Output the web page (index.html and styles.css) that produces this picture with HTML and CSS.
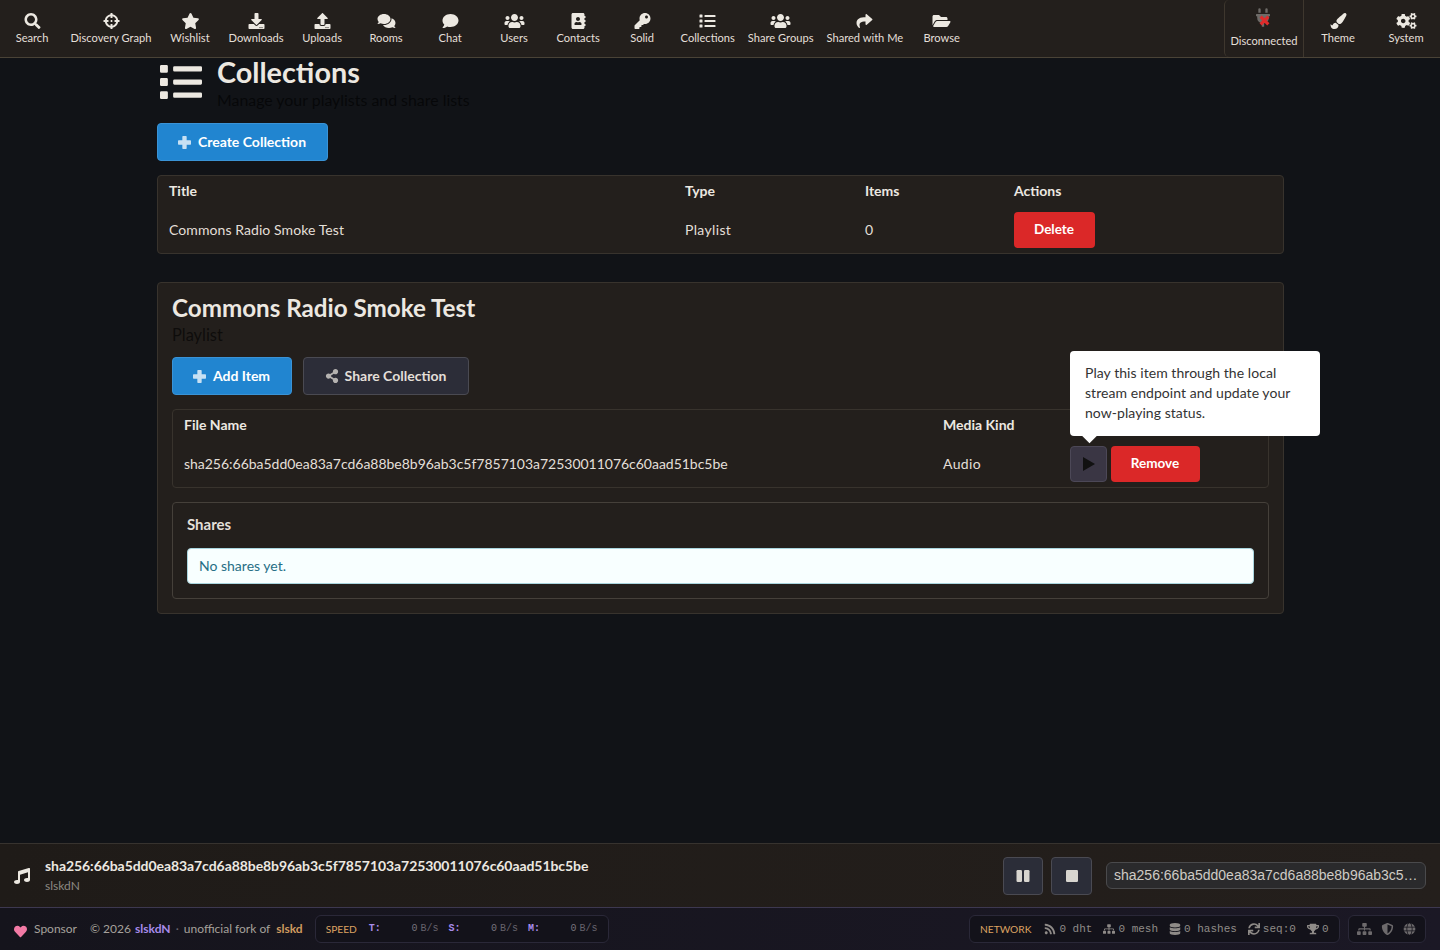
FILE: index.html
```html
<!DOCTYPE html>
<html lang="en">
<head>
  <meta charset="UTF-8">
  <meta name="viewport" content="width=device-width, initial-scale=1.0">
  <title>Collections - slskdN</title>
  <link rel="stylesheet" href="styles.css">
</head>
<body>
  <!-- icon sprite -->
  <svg class="sprite" xmlns="http://www.w3.org/2000/svg">
    <symbol id="i-search" viewBox="0 0 512 512"><path d="M505 442.7L405.3 343c-4.5-4.5-10.6-7-17-7H372c27.6-35.3 44-79.7 44-128C416 93.1 322.9 0 208 0S0 93.1 0 208s93.1 208 208 208c48.3 0 92.7-16.4 128-44v16.3c0 6.4 2.5 12.5 7 17l99.7 99.7c9.4 9.4 24.6 9.4 33.9 0l28.3-28.3c9.4-9.4 9.4-24.6.1-34zM208 336c-70.7 0-128-57.2-128-128 0-70.7 57.2-128 128-128 70.7 0 128 57.2 128 128 0 70.7-57.2 128-128 128z"/></symbol>
    <symbol id="i-crosshairs" viewBox="0 0 512 512"><path d="M500 224h-30.364C455.724 130.325 381.675 56.276 288 42.364V12c0-6.627-5.373-12-12-12h-40c-6.627 0-12 5.373-12 12v30.364C130.325 56.276 56.276 130.325 42.364 224H12c-6.627 0-12 5.373-12 12v40c0 6.627 5.373 12 12 12h30.364C56.276 381.675 130.325 455.724 224 469.636V500c0 6.627 5.373 12 12 12h40c6.627 0 12-5.373 12-12v-30.364C381.675 455.724 455.724 381.675 469.636 288H500c6.627 0 12-5.373 12-12v-40c0-6.627-5.373-12-12-12zM288 404.634V364c0-6.627-5.373-12-12-12h-40c-6.627 0-12 5.373-12 12v40.634C165.826 392.232 119.783 346.243 107.366 288H148c6.627 0 12-5.373 12-12v-40c0-6.627-5.373-12-12-12h-40.634C119.768 165.826 165.757 119.783 224 107.366V148c0 6.627 5.373 12 12 12h40c6.627 0 12-5.373 12-12v-40.634C346.174 119.768 392.217 165.757 404.634 224H364c-6.627 0-12 5.373-12 12v40c0 6.627 5.373 12 12 12h40.634C392.232 346.174 346.243 392.217 288 404.634zM288 256c0 17.673-14.327 32-32 32s-32-14.327-32-32c0-17.673 14.327-32 32-32s32 14.327 32 32z"/></symbol>
    <symbol id="i-star" viewBox="0 0 576 512"><path d="M259.3 17.8L194 150.2 47.9 171.5c-26.2 3.8-36.7 36.1-17.7 54.6l105.7 103-25 145.5c-4.5 26.3 23.2 46 46.4 33.7L288 439.6l130.7 68.7c23.2 12.2 50.9-7.4 46.4-33.7l-25-145.5 105.7-103c19-18.5 8.5-50.8-17.7-54.6L382 150.2 316.7 17.8c-11.7-23.6-45.6-23.9-57.4 0z"/></symbol>
    <symbol id="i-download" viewBox="0 0 512 512"><path d="M216 0h80c13.3 0 24 10.7 24 24v168h87.7c17.8 0 26.7 21.5 14.1 34.1L269.7 378.3c-7.5 7.5-19.8 7.5-27.3 0L90.1 226.1c-12.6-12.6-3.7-34.1 14.1-34.1H192V24c0-13.3 10.7-24 24-24zm296 376v112c0 13.3-10.7 24-24 24H24c-13.3 0-24-10.7-24-24V376c0-13.3 10.7-24 24-24h146.7l49 49c20.1 20.1 52.5 20.1 72.6 0l49-49H488c13.3 0 24 10.7 24 24zm-124 88c0-11-9-20-20-20s-20 9-20 20 9 20 20 20 20-9 20-20zm64 0c0-11-9-20-20-20s-20 9-20 20 9 20 20 20 20-9 20-20z"/></symbol>
    <symbol id="i-upload" viewBox="0 0 512 512"><path d="M296 384h-80c-13.3 0-24-10.7-24-24V192h-87.7c-17.8 0-26.7-21.5-14.1-34.1L242.3 5.7c7.5-7.5 19.8-7.5 27.3 0l152.2 152.2c12.6 12.6 3.7 34.1-14.1 34.1H320v168c0 13.3-10.7 24-24 24zm216-8v112c0 13.3-10.7 24-24 24H24c-13.3 0-24-10.7-24-24V376c0-13.3 10.7-24 24-24h136v8c0 30.9 25.1 56 56 56h80c30.9 0 56-25.1 56-56v-8h136c13.3 0 24 10.7 24 24zm-124 88c0-11-9-20-20-20s-20 9-20 20 9 20 20 20 20-9 20-20zm64 0c0-11-9-20-20-20s-20 9-20 20 9 20 20 20 20-9 20-20z"/></symbol>
    <symbol id="i-comments" viewBox="0 0 576 512"><path d="M416 192c0-88.4-93.1-160-208-160S0 103.6 0 192c0 34.3 14.1 65.9 38 92-13.4 30.2-35.5 54.2-35.8 54.5-2.2 2.3-2.8 5.7-1.5 8.7S4.8 352 8 352c36.6 0 66.9-12.3 88.7-25 32.2 15.7 70.3 25 111.3 25 114.9 0 208-71.6 208-160zm122 220c23.9-26 38-57.7 38-92 0-66.9-53.5-124.2-129.3-148.1.9 6.6 1.3 13.3 1.3 20.1 0 105.9-107.7 192-240 192-10.8 0-21.3-.8-31.7-1.9C207.8 439.6 281.8 480 368 480c41 0 79.1-9.2 111.3-25 21.8 12.7 52.1 25 88.7 25 3.2 0 6.1-1.9 7.3-4.8 1.3-2.9.7-6.3-1.5-8.7-.3-.3-22.4-24.2-35.8-54.5z"/></symbol>
    <symbol id="i-comment" viewBox="0 0 512 512"><path d="M256 32C114.6 32 0 125.1 0 240c0 49.6 21.4 95 57 130.7C44.5 421.1 2.7 466 2.2 466.5c-2.2 2.3-2.8 5.7-1.5 8.7S4.8 480 8 480c66.3 0 116-31.8 140.6-51.4 32.7 12.3 69 19.4 107.4 19.4 141.4 0 256-93.1 256-208S397.4 32 256 32z"/></symbol>
    <symbol id="i-users" viewBox="0 0 640 512"><path d="M96 224c35.3 0 64-28.7 64-64s-28.7-64-64-64-64 28.7-64 64 28.7 64 64 64zm448 0c35.3 0 64-28.7 64-64s-28.7-64-64-64-64 28.7-64 64 28.7 64 64 64zm32 32h-64c-17.6 0-33.5 7.1-45.1 18.6 40.3 22.1 68.9 62 75.1 109.4h66c17.7 0 32-14.3 32-32v-32c0-35.3-28.7-64-64-64zm-256 0c61.9 0 112-50.1 112-112S381.9 32 320 32 208 82.1 208 144s50.1 112 112 112zm76.8 32h-8.3c-20.8 10-43.9 16-68.5 16s-47.6-6-68.5-16h-8.3C179.6 288 128 339.6 128 403.2V432c0 26.5 21.5 48 48 48h288c26.5 0 48-21.5 48-48v-28.8c0-63.6-51.6-115.2-115.2-115.2zm-223.7-13.4C161.5 263.1 145.6 256 128 256H64c-35.3 0-64 28.7-64 64v32c0 17.7 14.3 32 32 32h65.9c6.3-47.4 34.9-87.3 75.2-109.4z"/></symbol>
    <symbol id="i-book" viewBox="0 0 448 512"><path d="M436 160c6.6 0 12-5.4 12-12v-40c0-6.6-5.4-12-12-12h-20V48c0-26.5-21.5-48-48-48H48C21.5 0 0 21.5 0 48v416c0 26.5 21.5 48 48 48h320c26.5 0 48-21.5 48-48v-48h20c6.6 0 12-5.4 12-12v-40c0-6.6-5.4-12-12-12h-20v-64h20c6.6 0 12-5.4 12-12v-40c0-6.6-5.4-12-12-12h-20v-64h20zm-228-32c35.3 0 64 28.7 64 64s-28.7 64-64 64-64-28.7-64-64 28.7-64 64-64zm112 236.8c0 10.6-10 19.2-22.4 19.2H118.4C106 384 96 375.4 96 364.8v-19.2c0-31.8 30.1-57.6 67.2-57.6h5c12.3 5.1 25.7 8 39.8 8s27.6-2.9 39.8-8h5c37.1 0 67.2 25.8 67.2 57.6v19.2z"/></symbol>
    <symbol id="i-key" viewBox="0 0 512 512"><path d="M512 176.001C512 273.203 433.202 352 336 352c-11.22 0-22.19-1.062-32.827-3.069l-24.012 27.014A23.999 23.999 0 0 1 261.223 384H224v40c0 13.255-10.745 24-24 24h-40v40c0 13.255-10.745 24-24 24H24c-13.255 0-24-10.745-24-24v-78.059c0-6.365 2.529-12.47 7.029-16.971l161.802-161.802C163.108 213.814 160 195.271 160 176 160 78.798 238.797.001 335.999 0 433.488-.001 512 78.511 512 176.001zM336 128c0 26.51 21.49 48 48 48s48-21.49 48-48-21.49-48-48-48-48 21.49-48 48z"/></symbol>
    <symbol id="i-list" viewBox="0 0 512 512"><path d="M80 368H16a16 16 0 0 0-16 16v64a16 16 0 0 0 16 16h64a16 16 0 0 0 16-16v-64a16 16 0 0 0-16-16zm0-320H16A16 16 0 0 0 0 64v64a16 16 0 0 0 16 16h64a16 16 0 0 0 16-16V64a16 16 0 0 0-16-16zm0 160H16a16 16 0 0 0-16 16v64a16 16 0 0 0 16 16h64a16 16 0 0 0 16-16v-64a16 16 0 0 0-16-16zm416 176H176a16 16 0 0 0-16 16v32a16 16 0 0 0 16 16h320a16 16 0 0 0 16-16v-32a16 16 0 0 0-16-16zm0-320H176a16 16 0 0 0-16 16v32a16 16 0 0 0 16 16h320a16 16 0 0 0 16-16V80a16 16 0 0 0-16-16zm0 160H176a16 16 0 0 0-16 16v32a16 16 0 0 0 16 16h320a16 16 0 0 0 16-16v-32a16 16 0 0 0-16-16z"/></symbol>
    <symbol id="i-share" viewBox="0 0 512 512"><path d="M503.691 189.836L327.687 37.851C312.281 24.546 288 35.347 288 56.015v80.053C127.371 137.907 0 170.1 0 322.326c0 61.441 39.581 122.309 83.333 154.132 13.653 9.931 33.111-2.533 28.077-18.631C66.066 312.814 132.917 274.316 288 272.085V360c0 20.7 24.3 31.453 39.687 18.164l176.004-152c11.071-9.562 11.086-26.753 0-36.328z"/></symbol>
    <symbol id="i-folder" viewBox="0 0 576 512"><path d="M572.694 292.093L500.27 416.248A63.997 63.997 0 0 1 444.989 448H45.025c-18.523 0-30.064-20.093-20.731-36.093l72.424-124.155A64 64 0 0 1 152 256h399.964c18.523 0 30.064 20.093 20.73 36.093zM152 224h328v-48c0-26.51-21.49-48-48-48H272l-64-64H48C21.49 64 0 85.49 0 112v278.046l69.077-118.418C86.214 242.25 117.989 224 152 224z"/></symbol>
    <symbol id="i-plug" viewBox="0 0 384 512"><path d="M320 32a32 32 0 0 0-64 0v96h64zm48 128H16a16 16 0 0 0-16 16v32a16 16 0 0 0 16 16h16v32a160.07 160.07 0 0 0 128 156.8V512h64v-99.2A160.07 160.07 0 0 0 352 256v-32h16a16 16 0 0 0 16-16v-32a16 16 0 0 0-16-16zM128 32a32 32 0 0 0-64 0v96h64z"/></symbol>
    <symbol id="i-brush" viewBox="0 0 512 512"><path d="M167.02 309.34c-40.12 2.58-76.53 17.86-97.19 72.3-2.35 6.21-8 9.98-14.59 9.98-11.11 0-45.46-27.67-55.25-34.35C0 439.62 37.93 512 128 512c75.86 0 128-43.77 128-120.19 0-3.11-.65-6.08-.97-9.13l-88.01-73.34zM457.89 0c-15.16 0-29.37 6.71-40.21 16.45C213.27 199.05 192 203.34 192 257.09c0 13.7 3.25 26.76 8.73 38.7l63.82 53.18c7.21 1.8 14.64 3.03 22.39 3.03 62.11 0 98.11-45.47 211.16-256.46 7.38-14.35 13.9-29.85 13.9-45.99C512 20.64 486 0 457.89 0z"/></symbol>
    <symbol id="i-cogs" viewBox="0 0 640 512"><path d="M512.1 191l-8.2 14.3c-3 5.3-9.4 7.5-15.1 5.4-11.8-4.4-22.6-10.7-32.1-18.6-4.6-3.8-5.8-10.5-2.8-15.7l8.2-14.3c-6.9-8-12.3-17.3-15.9-27.4h-16.5c-6 0-11.2-4.3-12.2-10.3-2-12-2.1-24.6 0-37.1 1-6 6.2-10.4 12.2-10.4h16.5c3.6-10.1 9-19.4 15.9-27.4l-8.2-14.3c-3-5.2-1.9-11.9 2.8-15.7 9.5-7.9 20.4-14.2 32.1-18.6 5.7-2.1 12.1.1 15.1 5.4l8.2 14.3c10.5-1.9 21.2-1.9 31.7 0L552 6.3c3-5.3 9.4-7.5 15.1-5.4 11.8 4.4 22.6 10.7 32.1 18.6 4.6 3.8 5.8 10.5 2.8 15.7l-8.2 14.3c6.9 8 12.3 17.3 15.9 27.4h16.5c6 0 11.2 4.3 12.2 10.3 2 12 2.1 24.6 0 37.1-1 6-6.2 10.4-12.2 10.4h-16.5c-3.6 10.1-9 19.4-15.9 27.4l8.2 14.3c3 5.2 1.9 11.9-2.8 15.7-9.5 7.9-20.4 14.2-32.1 18.6-5.7 2.1-12.1-.1-15.1-5.4l-8.2-14.3c-10.4 1.9-21.2 1.9-31.7 0zm-10.5-58.8c38.5 29.6 82.4-14.3 52.8-52.8-38.5-29.7-82.4 14.3-52.8 52.8zM386.3 286.1l33.7 16.8c10.1 5.8 14.5 18.1 10.5 29.1-8.9 24.2-26.4 46.4-42.6 65.8-7.4 8.9-20.2 11.1-30.3 5.3l-29.1-16.8c-16 13.7-34.6 24.6-54.9 31.7v33.6c0 11.6-8.3 21.6-19.7 23.6-24.6 4.2-50.4 4.4-75.9 0-11.5-2-20-11.9-20-23.6V418c-20.3-7.2-38.9-18-54.9-31.7L74 403c-10 5.8-22.9 3.6-30.3-5.3-16.2-19.4-33.3-41.6-42.2-65.7-4-10.9.4-23.2 10.5-29.1l33.3-16.8c-3.9-20.9-3.9-42.4 0-63.4L12 205.8c-10.1-5.8-14.6-18.1-10.5-29 8.9-24.2 26-46.4 42.2-65.8 7.4-8.9 20.2-11.1 30.3-5.3l29.1 16.8c16-13.7 34.6-24.6 54.9-31.7V57.1c0-11.5 8.2-21.5 19.6-23.5 24.6-4.2 50.5-4.4 76-.1 11.5 2 20 11.9 20 23.6v33.6c20.3 7.2 38.9 18 54.9 31.7l29.1-16.8c10-5.8 22.9-3.6 30.3 5.3 16.2 19.4 33.2 41.6 42.1 65.8 4 10.9.1 23.2-10 29.1l-33.7 16.8c3.9 21 3.9 42.5 0 63.5zm-117.6 21.1c59.2-77-28.7-164.9-105.7-105.7-59.2 77 28.7 164.9 105.7 105.7zm243.4 182.7l-8.2 14.3c-3 5.3-9.4 7.5-15.1 5.4-11.8-4.4-22.6-10.7-32.1-18.6-4.6-3.8-5.8-10.5-2.8-15.7l8.2-14.3c-6.9-8-12.3-17.3-15.9-27.4h-16.5c-6 0-11.2-4.3-12.2-10.3-2-12-2.1-24.6 0-37.1 1-6 6.2-10.4 12.2-10.4h16.5c3.6-10.1 9-19.4 15.9-27.4l-8.2-14.3c-3-5.2-1.9-11.9 2.8-15.7 9.5-7.9 20.4-14.2 32.1-18.6 5.7-2.1 12.1.1 15.1 5.4l8.2 14.3c10.5-1.9 21.2-1.9 31.7 0l8.2-14.3c3-5.3 9.4-7.5 15.1-5.4 11.8 4.4 22.6 10.7 32.1 18.6 4.6 3.8 5.8 10.5 2.8 15.7l-8.2 14.3c6.9 8 12.3 17.3 15.9 27.4h16.5c6 0 11.2 4.3 12.2 10.3 2 12 2.1 24.6 0 37.1-1 6-6.2 10.4-12.2 10.4h-16.5c-3.6 10.1-9 19.4-15.9 27.4l8.2 14.3c3 5.2 1.9 11.9-2.8 15.7-9.5 7.9-20.4 14.2-32.1 18.6-5.7 2.1-12.1-.1-15.1-5.4l-8.2-14.3c-10.4 1.9-21.2 1.9-31.7 0zM501.6 431c38.5 29.6 82.4-14.3 52.8-52.8-38.5-29.6-82.4 14.3-52.8 52.8z"/></symbol>
    <symbol id="i-plus" viewBox="0 0 12 12"><path d="M4.6 0h2.8c.4 0 .6.2.6.6V4h3.4c.4 0 .6.2.6.6v2.8c0 .4-.2.6-.6.6H8v3.4c0 .4-.2.6-.6.6H4.6c-.4 0-.6-.2-.6-.6V8H.6C.2 8 0 7.800 0 7.400V4.600C0 4.200.2 4 .6 4H4V.6c0-.4.2-.6.6-.6z"/></symbol>
    <symbol id="i-share-alt" viewBox="0 0 448 512"><path d="M352 320c-22.608 0-43.387 7.819-59.79 20.895l-102.486-64.054a96.551 96.551 0 0 0 0-41.683l102.486-64.054C308.613 184.181 329.392 192 352 192c53.019 0 96-42.981 96-96S405.019 0 352 0s-96 42.981-96 96c0 7.158.79 14.13 2.276 20.841L155.79 180.895C139.387 167.819 118.608 160 96 160c-53.019 0-96 42.981-96 96s42.981 96 96 96c22.608 0 43.387-7.819 59.79-20.895l102.486 64.054A96.301 96.301 0 0 0 256 416c0 53.019 42.981 96 96 96s96-42.981 96-96-42.981-96-96-96z"/></symbol>
    <symbol id="i-music" viewBox="0 0 512 512"><path d="M470.38 1.51L150.41 96A32 32 0 0 0 128 126.51v261.41A139 139 0 0 0 96 384c-53 0-96 28.66-96 64s43 64 96 64 96-28.66 96-64V214.32l256-75v184.61a138.4 138.4 0 0 0-32-3.93c-53 0-96 28.66-96 64s43 64 96 64 96-28.65 96-64V32a32 32 0 0 0-41.62-30.49z"/></symbol>
    <symbol id="i-heart" viewBox="0 0 512 512"><path d="M462.3 62.6C407.5 15.9 326 24.3 275.7 76.2L256 96.5l-19.7-20.3C186.1 24.3 104.5 15.9 49.7 62.6c-62.8 53.6-66.1 149.8-9.9 207.9l193.5 199.8c12.5 12.9 32.8 12.9 45.3 0l193.5-199.8c56.3-58.1 53-154.3-9.8-207.9z"/></symbol>
    <symbol id="i-rss" viewBox="0 0 448 512"><path d="M128.081 415.959c0 35.369-28.672 64.041-64.041 64.041S0 451.328 0 415.959s28.672-64.041 64.041-64.041 64.04 28.673 64.04 64.041zm175.66 47.25c-8.354-154.6-132.185-278.587-286.95-286.95C7.656 175.765 0 183.105 0 192.253v48.069c0 8.415 6.49 15.472 14.887 16.018 111.832 7.284 201.473 96.702 208.772 208.772.547 8.397 7.604 14.887 16.018 14.887h48.069c9.149.001 16.489-7.655 15.995-16.79zm144.249.288C439.596 229.677 251.465 40.445 16.503 32.01 7.473 31.686 0 38.981 0 48.016v48.068c0 8.625 6.835 15.645 15.453 15.999 191.179 7.839 344.627 161.316 352.465 352.465.353 8.618 7.373 15.453 15.999 15.453h48.068c9.034-.001 16.329-7.474 16.005-16.504z"/></symbol>
    <symbol id="i-sitemap" viewBox="0 0 640 512"><path d="M128 352H32c-17.67 0-32 14.33-32 32v96c0 17.67 14.33 32 32 32h96c17.67 0 32-14.33 32-32v-96c0-17.67-14.33-32-32-32zm-24-80h192v48h48v-48h192v48h48v-57.59c0-21.17-17.23-38.41-38.41-38.41H344v-64h40c17.67 0 32-14.33 32-32V32c0-17.67-14.33-32-32-32H256c-17.67 0-32 14.33-32 32v96c0 17.67 14.33 32 32 32h40v64H94.41C73.23 224 56 241.23 56 262.41V320h48v-48zm264 80h-96c-17.67 0-32 14.33-32 32v96c0 17.67 14.33 32 32 32h96c17.67 0 32-14.33 32-32v-96c0-17.67-14.33-32-32-32zm240 0h-96c-17.67 0-32 14.33-32 32v96c0 17.67 14.33 32 32 32h96c17.67 0 32-14.33 32-32v-96c0-17.67-14.33-32-32-32z"/></symbol>
    <symbol id="i-database" viewBox="0 0 448 512"><path d="M448 73.143v45.714C448 159.143 347.667 192 224 192S0 159.143 0 118.857V73.143C0 32.857 100.333 0 224 0s224 32.857 224 73.143zM448 176v102.857C448 319.143 347.667 352 224 352S0 319.143 0 278.857V176c48.125 33.143 136.208 48.572 224 48.572S399.874 209.143 448 176zm0 160v102.857C448 479.143 347.667 512 224 512S0 479.143 0 438.857V336c48.125 33.143 136.208 48.572 224 48.572S399.874 369.143 448 336z"/></symbol>
    <symbol id="i-sync" viewBox="0 0 512 512"><path d="M440.65 12.57l4 82.77A247.16 247.16 0 0 0 255.83 8C134.73 8 33.91 94.92 12.29 209.82A12 12 0 0 0 24.09 224h49.05a12 12 0 0 0 11.67-9.26 175.91 175.91 0 0 1 317-56.94l-101.46-4.86a12 12 0 0 0-12.57 12v47.41a12 12 0 0 0 12 12H500a12 12 0 0 0 12-12V12a12 12 0 0 0-12-12h-47.37a12 12 0 0 0-11.98 12.57zM255.83 432a175.61 175.61 0 0 1-146-77.8l101.8 4.87a12 12 0 0 0 12.57-12v-47.4a12 12 0 0 0-12-12H12a12 12 0 0 0-12 12V500a12 12 0 0 0 12 12h47.35a12 12 0 0 0 12-12.6l-4.15-82.57A247.17 247.17 0 0 0 255.83 504c121.11 0 221.93-86.92 243.55-201.82a12 12 0 0 0-11.8-14.18h-49.05a12 12 0 0 0-11.67 9.26A175.86 175.86 0 0 1 255.83 432z"/></symbol>
    <symbol id="i-trophy" viewBox="0 0 576 512"><path d="M552 64H448V24c0-13.3-10.7-24-24-24H152c-13.3 0-24 10.7-24 24v40H24C10.7 64 0 74.7 0 88v56c0 35.7 22.5 72.4 61.9 100.7 31.5 22.7 69.8 37.1 110 41.7C203.3 338.5 240 360 240 360v72h-48c-35.3 0-64 20.7-64 56v12c0 6.6 5.4 12 12 12h296c6.6 0 12-5.4 12-12v-12c0-35.3-28.7-56-64-56h-48v-72s36.7-21.5 68.1-73.6c40.3-4.6 78.6-19 110-41.7 39.3-28.3 61.9-65 61.9-100.7V88c0-13.3-10.7-24-24-24zM99.3 192.8C74.9 175.2 64 155.6 64 144v-16h64.2c1 32.6 5.8 61.2 12.8 86.2-15.1-5.2-29.2-12.4-41.7-21.4zM512 144c0 16.1-17.7 36.1-35.3 48.8-12.5 9-26.7 16.2-41.8 21.4 7-25 11.8-53.6 12.8-86.2H512v16z"/></symbol>
    <symbol id="i-shield" viewBox="0 0 512 512"><path d="M466.5 83.7l-192-80a48.15 48.15 0 0 0-36.9 0l-192 80C27.7 91.1 16 108.6 16 128c0 198.5 114.5 335.7 221.5 380.3 11.8 4.9 25.1 4.9 36.9 0C360.1 472.6 496 349.3 496 128c0-19.4-11.7-36.9-29.5-44.3zM256.1 446.3l-.1-381 175.9 73.3c-3.3 151.4-82.1 261.1-175.8 307.7z"/></symbol>
    <symbol id="i-globe" viewBox="0 0 496 512"><path d="M336.5 160C322 70.7 287.8 8 248 8s-74 62.7-88.5 152h177zM152 256c0 22.2 1.2 43.5 3.3 64h185.3c2.1-20.5 3.3-41.8 3.3-64s-1.2-43.5-3.3-64H155.3c-2.1 20.5-3.3 41.8-3.3 64zm324.7-96c-28.6-67.9-86.5-120.4-158-141.6 24.4 33.8 41.2 84.7 50 141.6h108zM177.2 18.4C105.8 39.6 47.8 92.1 19.3 160h108c8.7-56.9 25.5-107.8 49.9-141.6zM487.4 192H372.7c2.1 21 3.3 42.5 3.3 64s-1.2 43-3.3 64h114.6c5.5-20.5 8.6-41.8 8.6-64s-3.1-43.5-8.5-64zM120 256c0-21.5 1.2-43 3.3-64H8.6C3.2 212.5 0 233.8 0 256s3.2 43.5 8.6 64h114.6c-2-21-3.2-42.5-3.2-64zm39.5 96c14.5 89.3 48.7 152 88.5 152s74-62.7 88.5-152h-177zm159.3 141.6c71.4-21.2 129.4-73.7 158-141.6h-108c-8.8 56.9-25.6 107.8-50 141.6zM19.3 352c28.6 67.9 86.5 120.4 158 141.6-24.4-33.8-41.2-84.7-50-141.6h-108z"/></symbol>
  </svg>

  <div class="app">
    <nav class="navbar">
      <a class="nav-item"><svg class="icon"><use href="#i-search"/></svg>Search</a>
      <a class="nav-item"><svg class="icon"><use href="#i-crosshairs"/></svg>Discovery Graph</a>
      <a class="nav-item"><svg class="icon"><use href="#i-star"/></svg>Wishlist</a>
      <a class="nav-item"><svg class="icon"><use href="#i-download"/></svg>Downloads</a>
      <a class="nav-item"><svg class="icon"><use href="#i-upload"/></svg>Uploads</a>
      <a class="nav-item"><svg class="icon"><use href="#i-comments"/></svg>Rooms</a>
      <a class="nav-item"><svg class="icon"><use href="#i-comment"/></svg>Chat</a>
      <a class="nav-item"><svg class="icon"><use href="#i-users"/></svg>Users</a>
      <a class="nav-item"><svg class="icon"><use href="#i-book"/></svg>Contacts</a>
      <a class="nav-item"><svg class="icon"><use href="#i-key"/></svg>Solid</a>
      <a class="nav-item"><svg class="icon"><use href="#i-list"/></svg>Collections</a>
      <a class="nav-item"><svg class="icon"><use href="#i-users"/></svg>Share Groups</a>
      <a class="nav-item"><svg class="icon"><use href="#i-share"/></svg>Shared with Me</a>
      <a class="nav-item"><svg class="icon"><use href="#i-folder"/></svg>Browse</a>
      <div class="nav-right">
        <a class="nav-item nav-status">
          <span class="plug">
            <svg class="icon icon-plug"><use href="#i-plug"/></svg>
            <svg class="plug-x" viewBox="0 0 10 10"><path d="M1.5 1.5l7 7M8.500 1.500l-7 7"/></svg>
          </span>
          Disconnected
        </a>
        <a class="nav-item nav-wide"><svg class="icon"><use href="#i-brush"/></svg>Theme</a>
        <a class="nav-item nav-wide"><svg class="icon"><use href="#i-cogs"/></svg>System</a>
      </div>
    </nav>

    <main class="main">
      <div class="page-header">
        <svg class="page-icon"><use href="#i-list"/></svg>
        <div>
          <h2 class="page-title">Collections</h2>
          <div class="subheader">Manage your playlists and share lists</div>
        </div>
      </div>

      <button class="btn btn-primary btn-create"><svg class="btn-icon"><use href="#i-plus"/></svg>Create Collection</button>

      <table class="tbl tbl-collections">
        <thead>
          <tr><th class="col-title">Title</th><th class="col-type">Type</th><th class="col-items">Items</th><th>Actions</th></tr>
        </thead>
        <tbody>
          <tr>
            <td>Commons Radio Smoke Test</td><td class="cell-short">Playlist</td><td>0</td>
            <td><button class="btn btn-red">Delete</button></td>
          </tr>
        </tbody>
      </table>

      <section class="panel">
        <h2 class="panel-title">Commons Radio Smoke Test</h2>
        <div class="panel-sub">Playlist</div>
        <div class="panel-actions">
          <button class="btn btn-primary btn-add"><svg class="btn-icon"><use href="#i-plus"/></svg>Add Item</button>
          <button class="btn btn-dark"><svg class="btn-icon btn-icon-share"><use href="#i-share-alt"/></svg>Share Collection</button>
        </div>

        <table class="tbl tbl-items">
          <thead>
            <tr><th class="col-file">File Name</th><th class="col-kind">Media Kind</th><th></th></tr>
          </thead>
          <tbody>
            <tr>
              <td class="cell-file">sha256:66ba5dd0ea83a7cd6a88be8b96ab3c5f7857103a72530011076c60aad51bc5be</td>
              <td class="cell-short">Audio</td>
              <td>
                <div class="row-actions">
                  <div class="play-wrap">
                    <button class="btn-play"><span class="play-tri"></span></button>
                    <div class="tooltip">Play this item through the local stream endpoint and update your now-playing status.</div>
                  </div>
                  <button class="btn btn-red btn-remove">Remove</button>
                </div>
              </td>
            </tr>
          </tbody>
        </table>

        <div class="shares">
          <h4 class="shares-title">Shares</h4>
          <div class="message">No shares yet.</div>
        </div>
      </section>
    </main>

    <div class="player">
      <svg class="player-note"><use href="#i-music"/></svg>
      <div class="player-info">
        <div class="player-title">sha256:66ba5dd0ea83a7cd6a88be8b96ab3c5f7857103a72530011076c60aad51bc5be</div>
        <div class="player-artist">slskdN</div>
      </div>
      <button class="player-btn btn-pause"><svg class="player-glyph" viewBox="0 0 14 14"><rect x="0.5" y="1" width="5.5" height="12" rx="1.2"/><rect x="8" y="1" width="5.5" height="12" rx="1.2"/></svg></button>
      <button class="player-btn btn-stop"><svg class="player-glyph" viewBox="0 0 14 14"><rect x="1" y="1" width="12" height="12" rx="1.2"/></svg></button>
      <div class="player-select">sha256:66ba5dd0ea83a7cd6a88be8b96ab3c5…</div>
    </div>

    <footer class="footer">
      <svg class="heart"><use href="#i-heart"/></svg>
      <span class="sponsor">Sponsor</span>
      <span class="credit">© 2026 <b class="brand">slskdN</b> <i class="dot">·</i> unofficial fork of <b class="fork">slskd</b></span>
      <div class="stat-box speed">
        <span class="box-label">SPEED</span>
        <span class="speed-cell"><b>T:</b><span>0<small>B/s</small></span></span>
        <span class="speed-cell"><b>S:</b><span>0<small>B/s</small></span></span>
        <span class="speed-cell"><b>M:</b><span>0<small>B/s</small></span></span>
      </div>
      <div class="footer-spacer"></div>
      <div class="stat-box network">
        <span class="box-label">NETWORK</span>
        <span class="net-cell"><svg class="net-icon"><use href="#i-rss"/></svg>0 dht</span>
        <span class="net-cell"><svg class="net-icon"><use href="#i-sitemap"/></svg>0 mesh</span>
        <span class="net-cell"><svg class="net-icon"><use href="#i-database"/></svg>0 hashes</span>
        <span class="net-cell"><svg class="net-icon"><use href="#i-sync"/></svg>seq:0</span>
        <span class="net-cell"><svg class="net-icon"><use href="#i-trophy"/></svg>0</span>
      </div>
      <div class="stat-box status-icons">
        <svg class="net-icon"><use href="#i-sitemap"/></svg>
        <svg class="net-icon"><use href="#i-shield"/></svg>
        <svg class="net-icon"><use href="#i-globe"/></svg>
      </div>
    </footer>
  </div>
</body>
</html>
```
FILE: styles.css
```css
* {
  box-sizing: border-box;
}
html, body {
  margin: 0;
  height: 100%;
}
body {
  font-family: Lato, "Open Sans", sans-serif;
  font-size: 14px;
  color: #e8e4de;
  background: #111317;
  overflow: hidden;
}
.sprite {
  display: none;
}
.app {
  display: flex;
  flex-direction: column;
  height: 100vh;
}

/* top nav */
.navbar {
  display: flex;
  height: 58px;
  flex: none;
  background: #231f1c;
  border-bottom: 1px solid #4a4337;
}
.nav-item {
  display: flex;
  flex-direction: column;
  align-items: center;
  min-width: 64px;
  padding: 13px 6.5px 0;
  font-size: 11.13px;
  line-height: 14px;
  color: #e3dfd8;
  white-space: nowrap;
}
.icon {
  width: 21px;
  height: 16px;
  margin-bottom: 2px;
  fill: #ece8e1;
}
.nav-right {
  display: flex;
  margin-left: auto;
}
.nav-wide {
  width: 68px;
}
.nav-status {
  width: 80px;
  padding-top: 8px;
  border-left: 1px solid #3e372e;
  border-right: 1px solid #3e372e;
  border-radius: 5px 0 0 5px;
  height: 57px;
}
.plug {
  position: relative;
  display: block;
  height: 19px;
  margin-bottom: 7px;
}
.icon-plug {
  display: block;
  width: 14px;
  height: 19px;
  margin: 0 0 0 -2px;
  fill: #6e6b68;
}
.plug-x {
  position: absolute;
  left: 1px;
  top: 7px;
  width: 11px;
  height: 11px;
  fill: none;
  stroke: #e02b2b;
  stroke-width: 2.8;
}

/* page */
.main {
  flex: 1;
  margin: 0 156px 0 157px;
}
.page-header {
  display: flex;
  align-items: flex-start;
  gap: 15px;
  height: 65px;
}
.page-icon {
  width: 42px;
  height: 42px;
  margin: 3px 0 0 3px;
  fill: #ece8e1;
}
.page-title {
  margin: -1px 0 0;
  font-size: 28.8px;
  font-weight: 700;
  line-height: 30px;
  color: #ece8e1;
}
.subheader {
  margin-top: 3px;
  font-size: 15.9px;
  line-height: 20px;
  color: rgba(0, 0, 0, 0.6);
}

/* buttons */
.btn {
  display: inline-flex;
  align-items: center;
  justify-content: center;
  height: 38px;
  padding: 0 1px 2px 0;
  border: 1px solid transparent;
  border-radius: 4px;
  font-family: inherit;
  font-size: 14px;
  font-weight: 700;
  color: #fff;
  cursor: pointer;
}
.btn-icon {
  width: 13px;
  height: 13px;
  margin: 2px 7px 0 0;
  fill: currentColor;
  opacity: 0.75;
}
.btn-icon-share {
  width: 14px;
  height: 14px;
  margin-right: 6px;
}
.btn-primary {
  background: #2185d0;
  border-color: #3a93d6;
}
.btn-create {
  width: 171px;
  margin-bottom: 14px;
}
.btn-add {
  width: 120px;
}
.btn-dark {
  width: 166px;
  background: #2c2d38;
  border-color: #4a4a52;
  color: #e3dfd8;
}
.btn-red {
  width: 81px;
  height: 36px;
  background: #db2828;
  font-size: 13.5px;
}
.btn-remove {
  width: 89px;
}

/* tables */
.tbl {
  width: 100%;
  border-collapse: separate;
  border-spacing: 0;
  background: #231f1c;
  border: 1px solid #38332d;
  border-radius: 4px;
  table-layout: fixed;
}
.tbl th {
  height: 30px;
  padding: 0 11px 2px;
  text-align: left;
  font-size: 14px;
  font-weight: 700;
  color: #ece8e1;
}
.tbl td {
  height: 47px;
  padding: 0 11px;
  font-size: 14px;
  letter-spacing: 0.08px;
  color: #e3dfd8;
}
.tbl .cell-short {
  letter-spacing: 0.35px;
}
.tbl .cell-file {
  letter-spacing: -0.02px;
}
.col-title {
  width: 516px;
}
.col-type {
  width: 180px;
}
.col-items {
  width: 149px;
}
.tbl-collections {
  margin-bottom: 28px;
}

/* collection detail */
.panel {
  height: 332px;
  padding: 10px 14px 14px;
  background: #231f1c;
  border: 1px solid #38332d;
  border-radius: 4px;
}
.panel-title {
  margin: 0;
  font-size: 24.2px;
  font-weight: 700;
  line-height: 30px;
  color: #ece8e1;
}
.panel-sub {
  margin: 0 0 11px;
  padding-top: 1px;
  font-size: 16.4px;
  line-height: 22px;
  color: rgba(0, 0, 0, 0.6);
}
.panel-actions {
  display: flex;
  gap: 11px;
  margin-bottom: 14px;
}
.col-file {
  width: 759px;
}
.col-kind {
  width: 127px;
}
.tbl-items {
  margin-bottom: 14px;
}
.row-actions {
  display: flex;
  gap: 4px;
}
.play-wrap {
  position: relative;
}
.btn-play {
  display: flex;
  align-items: center;
  justify-content: center;
  width: 37px;
  height: 36px;
  padding: 0;
  background: #3a3644;
  border: 1px solid #4c4857;
  border-radius: 4px;
}
.play-tri {
  width: 0;
  height: 0;
  border-left: 12px solid #111;
  border-top: 7px solid transparent;
  border-bottom: 7px solid transparent;
}
.tooltip {
  position: absolute;
  left: 0;
  bottom: 46px;
  width: 250px;
  padding: 12px 15px 13px;
  font-size: 14px;
  line-height: 20px;
  letter-spacing: 0.05px;
  color: #333;
  background: #fff;
  border-radius: 4px;
}
.tooltip::after {
  content: "";
  position: absolute;
  left: 14px;
  bottom: -5px;
  width: 11px;
  height: 11px;
  background: #fff;
  transform: rotate(45deg);
}
.shares {
  padding: 11px 14px 14px;
  border: 1px solid #45403a;
  border-radius: 4px;
}
.shares-title {
  margin: 0 0 14px;
  font-size: 15px;
  font-weight: 700;
  line-height: 20px;
  color: #e3dfd8;
}
.message {
  height: 36px;
  padding: 0 11px;
  font-size: 14px;
  line-height: 34px;
  color: #276f86;
  background: #f8ffff;
  border: 1px solid #a9d5de;
  border-radius: 4px;
}

/* now playing bar */
.player {
  display: flex;
  align-items: center;
  flex: none;
  height: 64px;
  padding: 0 14px;
  background: linear-gradient(90deg, #1f1b18, #241f1c);
  border-top: 1px solid #37332f;
}
.player-note {
  width: 16px;
  height: 16px;
  fill: #ece8e1;
  flex: none;
}
.player-info {
  flex: 1;
  margin-left: 15px;
}
.player-title {
  font-size: 14px;
  font-weight: 700;
  line-height: 18px;
  letter-spacing: -0.07px;
  color: #ece8e1;
}
.player-artist {
  margin-top: 3px;
  font-size: 12px;
  line-height: 16px;
  color: #8d8982;
}
.player-btn {
  display: flex;
  align-items: center;
  justify-content: center;
  height: 38px;
  padding: 0;
  background: #2b2d38;
  border: 1px solid #4a4a52;
  border-radius: 4px;
}
.btn-pause {
  width: 40px;
}
.btn-stop {
  width: 41px;
  margin-left: 8px;
}
.player-glyph {
  width: 14px;
  height: 14px;
  fill: #d8d5cf;
}
.player-select {
  width: 320px;
  height: 27px;
  margin-left: 14px;
  padding: 0 7px;
  white-space: nowrap;
  font-family: "Liberation Sans", sans-serif;
  font-size: 14px;
  line-height: 25px;
  color: #cfcbc5;
  background: #2a2a2c;
  border: 1px solid #4a4a4c;
  border-radius: 6px;
}

/* status footer */
.footer {
  display: flex;
  align-items: center;
  flex: none;
  height: 43px;
  padding: 0 14px 1px;
  font-size: 12px;
  color: #a5a19b;
  background: linear-gradient(90deg, #15141c, #1b1825);
  border-top: 1px solid #3d3850;
}
.heart {
  width: 13px;
  height: 13px;
  margin-top: 5px;
  fill: #f27aa5;
}
.sponsor {
  margin-left: 7px;
}
.credit {
  margin-left: 13px;
}
.brand {
  margin-left: 1px;
  color: #a78bea;
}
.fork {
  margin-left: 3px;
  color: #cf9a5e;
}
.dot {
  font-style: normal;
  color: #6a6670;
  margin: 0 2px;
}
.stat-box {
  display: flex;
  align-items: center;
  height: 28px;
  background: #13121a;
  border: 1px solid #2a2838;
  border-radius: 6px;
}
.speed {
  width: 294px;
  margin-left: 12px;
  padding: 0 10px;
}
.box-label {
  font-size: 10.2px;
  color: #dca262;
}
.speed-cell {
  display: flex;
  justify-content: space-between;
  width: 70px;
  margin-left: 10px;
  font-family: "Liberation Mono", monospace;
  font-size: 10px;
  color: #77737d;
}
.speed .box-label {
  margin-right: 2px;
}
.speed-cell b {
  color: #a78bea;
}
.speed-cell small {
  margin-left: 3px;
  font-size: 10px;
  color: #66626c;
}
.footer-spacer {
  flex: 1;
}
.network {
  width: 371px;
  padding: 0 10px;
  gap: 11px;
}
.network .box-label {
  margin-right: 2px;
}
.net-cell {
  display: flex;
  align-items: center;
  gap: 3px;
  font-family: "Liberation Mono", monospace;
  font-size: 11px;
  color: #8f8b88;
}
.net-icon {
  width: 12px;
  height: 12px;
  fill: #8f8b88;
}
.status-icons {
  width: 78px;
  margin-left: 8px;
  justify-content: space-evenly;
}
.status-icons .net-icon {
  width: 15px;
  fill: #6d6a6c;
}
```
